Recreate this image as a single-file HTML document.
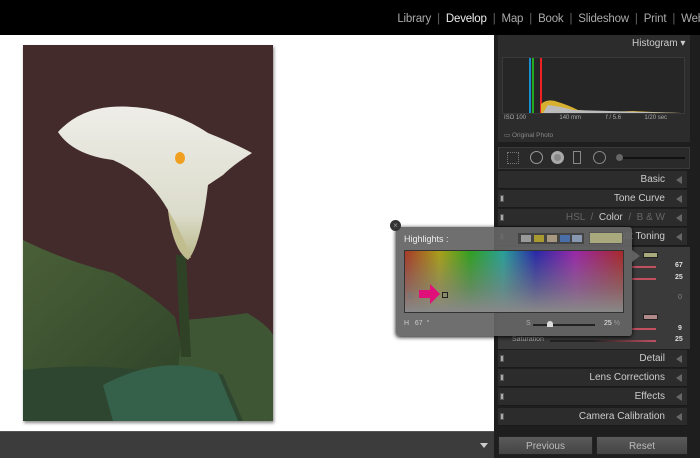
<!DOCTYPE html>
<html><head><style>
*{margin:0;padding:0;box-sizing:border-box}
body{width:700px;height:458px;overflow:hidden;background:#fff;font-family:"Liberation Sans",sans-serif;position:relative}
.abs{position:absolute}
#top{left:0;top:0;width:700px;height:35px;background:#000}
#nav{right:-4px;top:13px;font-size:11.5px;color:#aaa;white-space:nowrap;letter-spacing:-0.2px}
#nav span.s{color:#666;margin:0 6px}
#nav b{color:#eee;font-weight:normal}
#bot{left:0;top:431px;width:494px;height:27px;background:#3c3c3c;border-top:1px solid #555}
#panel{left:494px;top:35px;width:206px;height:423px;background:#1e1e1e}
.row{position:absolute;left:498px;width:189px;height:18px;background:#2c2c2c;border-bottom:1px solid #1a1a1a;color:#ccc;font-size:10px;text-align:right;padding-right:22px;line-height:18px}
.row:after{content:"";position:absolute;right:5px;top:5px;border:4px solid transparent;border-right:6px solid #666;border-left:none}
.row .k{position:absolute;left:2px;top:5px;width:4px;height:7px;background:#aaa;border:1px solid #555}
.btn{position:absolute;top:436px;height:19px;background:linear-gradient(#5a5a5a,#444);color:#bbb;font-size:10px;text-align:center;line-height:19px;border:1px solid #222}
</style></head><body>
<div id="top" class="abs"></div>
<div id="nav" class="abs">Library<span class="s">|</span><b>Develop</b><span class="s">|</span>Map<span class="s">|</span>Book<span class="s">|</span>Slideshow<span class="s">|</span>Print<span class="s">|</span>Web</div>

<svg class="abs" style="left:23px;top:45px;box-shadow:1px 2px 3px #888" width="250" height="376" viewBox="0 0 250 376">
<defs>
<linearGradient id="lf" x1="0" y1="0" x2="1" y2="1"><stop offset="0" stop-color="#4a6038"/><stop offset="1" stop-color="#2f4428"/></linearGradient>
<linearGradient id="fl" x1="0" y1="0" x2="0" y2="1"><stop offset="0" stop-color="#eeede8"/><stop offset=".7" stop-color="#dcdccc"/><stop offset="1" stop-color="#b8b888"/></linearGradient>
</defs>
<rect width="250" height="376" fill="#432a2b"/>
<path d="M0 195 Q40 215 90 228 Q130 250 152 272 L165 330 L0 345Z" fill="url(#lf)"/>
<path d="M160 275 Q200 272 224 268 Q245 280 250 290 L250 376 L150 376Z" fill="#3e5633"/>
<path d="M0 325 Q60 318 120 325 Q170 318 200 330 L220 376 L0 376Z" fill="#2e4630"/>
<path d="M80 340 Q140 308 195 328 L215 376 L90 376Z" fill="#35614a"/>
<path d="M153 210 L163 210 L168 312 L158 312Z" fill="#2f4226"/>
<path d="M35 87 Q55 65 87 62 Q140 58 185 88 Q215 100 229 108 Q210 120 200 130 L185 140 Q178 200 165 215 Q150 205 145 165 Q125 130 90 115 Q50 110 35 87Z" fill="url(#fl)"/>
<path d="M145 165 Q160 190 168 213 Q150 208 145 165Z" fill="#c2bd8e"/>
<ellipse cx="157" cy="113" rx="5" ry="6" fill="#f0a020"/>
</svg>

<div id="bot" class="abs"><div class="abs" style="left:480px;top:11px;border:4px solid transparent;border-top:5px solid #ccc"></div></div>

<div id="panel" class="abs"></div>
<div class="abs" style="left:498px;top:35px;width:192px;height:107px;background:#2c2c2c"></div>
<div class="abs" style="left:632px;top:38px;font-size:10px;color:#ccc">Histogram ▾</div>
<div class="abs" style="left:502px;top:57px;width:183px;height:57px;background:#262626;border:1px solid #3a3a3a"></div>
<svg class="abs" style="left:503px;top:58px" width="181" height="56">
<rect x="26" y="0" width="2" height="55" fill="#1a8fd0"/>
<rect x="29" y="0" width="2" height="55" fill="#2a2"/><rect x="37" y="0" width="2" height="55" fill="#e22"/>
<path d="M38 55 L38 46 Q45 40 55 44 Q65 47 75 52 L100 54 L130 53 L150 54 L178 55Z" fill="#d8b030"/>
<path d="M40 55 L45 47 Q55 48 70 52 L178 55Z" fill="#bbb"/>
</svg>
<div class="abs" style="left:504px;top:115px;font-size:6px;color:#aaa;width:180px;white-space:pre">ISO 100                    140 mm               f / 5.6              1/20 sec</div>
<div class="abs" style="left:504px;top:131px;font-size:6.5px;color:#888">▭ Original Photo</div>
<div class="abs" style="left:498px;top:147px;width:192px;height:22px;background:#2a2a2a;border:1px solid #3a3a3a"></div>
<div class="abs" style="left:507px;top:152px;width:12px;height:12px;border:1px dotted #777"></div>
<div class="abs" style="left:530px;top:151px;width:13px;height:13px;border:1px solid #999;border-radius:50%"></div>
<div class="abs" style="left:551px;top:151px;width:13px;height:13px;background:#888;border-radius:50%;border:3px solid #aaa"></div>
<div class="abs" style="left:573px;top:151px;width:8px;height:13px;border:1px solid #888"></div>
<div class="abs" style="left:593px;top:151px;width:13px;height:13px;border:1px solid #888;border-radius:50%"></div>
<div class="abs" style="left:620px;top:157px;width:65px;height:2px;background:#111"></div>
<div class="abs" style="left:616px;top:154px;width:7px;height:7px;background:#666;border-radius:50%"></div>

<div class="row" style="top:171px">Basic</div>
<div class="row" style="top:190px"><i class="k"></i>Tone Curve</div>
<div class="row" style="top:209px;color:#666"><i class="k"></i>HSL &nbsp;/ &nbsp;<span style="color:#ccc">Color</span> &nbsp;/ &nbsp;B &amp; W</div>
<div class="row" style="top:228px"><i class="k"></i>Split Toning</div>
<div class="abs" style="left:498px;top:247px;width:192px;height:102px;background:#3a3a3a"></div>
<div class="abs" style="left:643px;top:252px;width:15px;height:6px;background:#a8aa7e;border:1px solid #222"></div>
<div class="abs" style="left:643px;top:314px;width:15px;height:6px;background:#b08a88;border:1px solid #222"></div>
<div class="abs" style="left:675px;top:262px;font-size:7px;color:#ddd;font-weight:bold">67</div>
<div class="abs" style="left:675px;top:274px;font-size:7px;color:#ddd;font-weight:bold">25</div>
<div class="abs" style="left:678px;top:294px;font-size:7px;color:#888">0</div>
<div class="abs" style="left:678px;top:325px;font-size:7px;color:#ddd;font-weight:bold">9</div>
<div class="abs" style="left:675px;top:336px;font-size:7px;color:#ddd;font-weight:bold">25</div>
<div class="abs" style="left:632px;top:266px;width:24px;height:2px;background:#c05060"></div>
<div class="abs" style="left:632px;top:278px;width:24px;height:2px;background:#c05060"></div>
<div class="abs" style="left:632px;top:328px;width:24px;height:2px;background:#c05060"></div>
<div class="abs" style="left:512px;top:336px;font-size:7px;color:#aaa">Saturation</div>
<div class="abs" style="left:550px;top:340px;width:106px;height:2px;background:linear-gradient(90deg,#222,#222 40%,#c05060)"></div>
<div class="row" style="top:350px"><i class="k"></i>Detail</div>
<div class="row" style="top:369px"><i class="k"></i>Lens Corrections</div>
<div class="row" style="top:388px"><i class="k"></i>Effects</div>
<div class="row" style="top:408px"><i class="k"></i>Camera Calibration</div>
<div class="btn" style="left:498px;width:95px">Previous</div>
<div class="btn" style="left:596px;width:92px">Reset</div>

<!-- popup -->
<div class="abs" style="left:396px;top:227px;width:236px;height:109px;background:rgba(100,100,100,0.93);border-radius:3px;box-shadow:0 1px 4px #000"></div>
<div class="abs" style="left:632px;top:250px;border:6px solid transparent;border-left:8px solid rgba(100,100,100,0.93)"></div>
<div class="abs" style="left:390px;top:220px;width:11px;height:11px;border-radius:50%;background:#333;color:#999;font-size:8px;line-height:11px;text-align:center">×</div>
<div class="abs" style="left:404px;top:234px;font-size:9px;color:#eee">Highlights :</div>
<div class="abs" style="left:518px;top:233px;width:66px;height:11px;background:#444"></div>
<div class="abs" style="left:521px;top:235px;width:10px;height:7px;background:#999"></div>
<div class="abs" style="left:534px;top:235px;width:10px;height:7px;background:#a89a30"></div>
<div class="abs" style="left:547px;top:235px;width:10px;height:7px;background:#a89880"></div>
<div class="abs" style="left:560px;top:235px;width:10px;height:7px;background:#4a6ea8"></div>
<div class="abs" style="left:572px;top:235px;width:10px;height:7px;background:#8898b0"></div>
<div class="abs" style="left:589px;top:232px;width:34px;height:12px;background:#a8aa7e;border:1px solid #555"></div>
<div class="abs" style="left:404px;top:250px;width:220px;height:63px;border:1px solid #333;background:linear-gradient(rgba(128,128,128,0),rgba(128,128,128,.6) 60%,#888),linear-gradient(90deg,#a83828,#a8a018 16%,#30a020 30%,#28a098 45%,#2828a8 60%,#9828a8 78%,#a82828)"></div>
<div class="abs" style="left:408px;top:293px;width:5px;height:5px;border:1px solid #777"></div>
<svg class="abs" style="left:419px;top:284px" width="22" height="20"><path d="M0 6 H11 V0 L21 10 L11 20 V14 H0Z" fill="#e0107a"/></svg>
<div class="abs" style="left:442px;top:292px;width:6px;height:6px;border:1px solid #222"></div>
<div class="abs" style="left:404px;top:320px;font-size:7px;color:#ccc">H &nbsp; 67 &nbsp;°</div>
<div class="abs" style="left:526px;top:320px;font-size:7px;color:#aaa">S</div>
<div class="abs" style="left:533px;top:324px;width:62px;height:2px;background:#222"></div>
<div class="abs" style="left:547px;top:321px;width:6px;height:6px;background:#ddd;border-radius:50% 50% 0 0"></div>
<div class="abs" style="left:604px;top:320px;font-size:7px;color:#eee">25 <span style="color:#999">%</span></div>
</body></html>
